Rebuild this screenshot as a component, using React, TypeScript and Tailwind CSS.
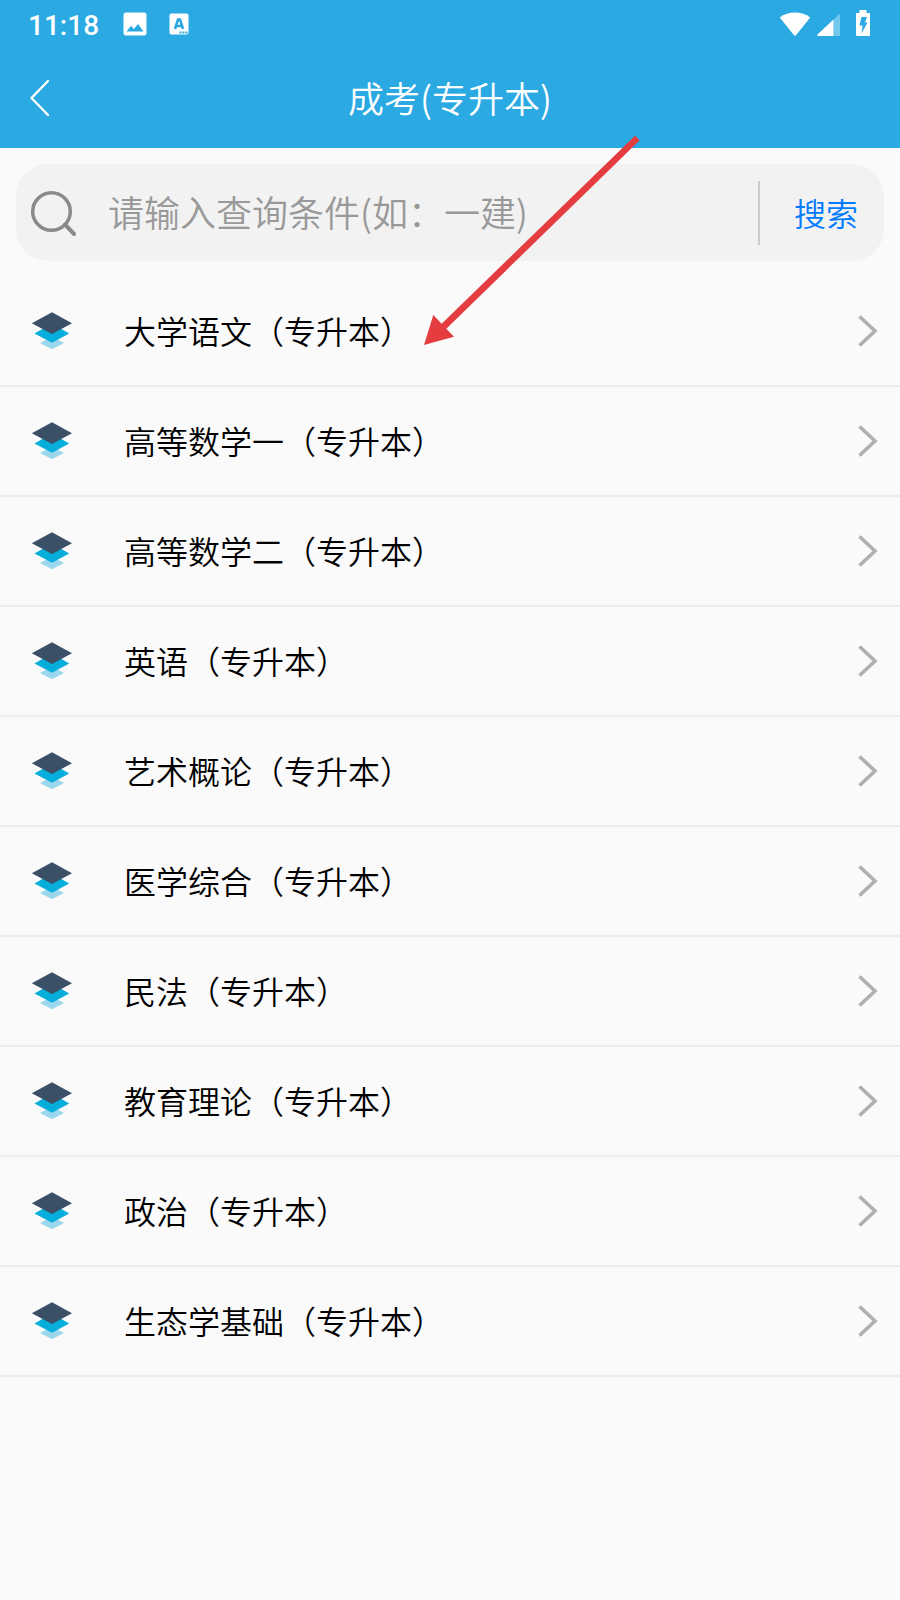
import { useState } from 'react';

interface Subject { id: number; name: string; }

const SUBJECTS: Subject[] = [
  { id: 1, name: '大学语文（专升本）' },
  { id: 2, name: '高等数学一（专升本）' },
  { id: 3, name: '高等数学二（专升本）' },
  { id: 4, name: '英语（专升本）' },
  { id: 5, name: '艺术概论（专升本）' },
  { id: 6, name: '医学综合（专升本）' },
  { id: 7, name: '民法（专升本）' },
  { id: 8, name: '教育理论（专升本）' },
  { id: 9, name: '政治（专升本）' },
  { id: 10, name: '生态学基础（专升本）' },
];

function StatusBar() {
  return (
    <div className="flex items-center justify-between h-12 pl-7 pr-[30px]">
      <div className="flex items-center">
        <span className="pt-1 font-['Roboto',sans-serif] font-medium text-[28px] leading-8">11:18</span>
        <svg className="ml-6 w-6 h-6" viewBox="0 0 24 24" aria-hidden="true">
          <path fill="#fff" fillRule="evenodd" d="M3 .5h18A2.500 2.500 0 0 1 23.500 3v18a2.500 2.500 0 0 1-2.500 2.500H3A2.500 2.500 0 0 1 .5 21V3A2.500 2.500 0 0 1 3 .5ZM3.500 19.500h17l-5.500-7.500-4.200 5-2.800-3.200Z" />
        </svg>
        <svg className="ml-[22px] w-5 h-[22px]" viewBox="0 0 20 22" aria-hidden="true">
          <rect x=".5" y=".5" width="19" height="21" rx="2" fill="#fff" />
          <path d="M6 16 9 6.500h2L14 16M7.500 13h5" fill="none" stroke="#2aa9e3" strokeWidth="2.600" />
          <path d="M10.500 19.500h8" stroke="#2aa9e3" strokeWidth="2" strokeDasharray="2 1" />
        </svg>
      </div>
      <div className="flex items-end pb-[2px]">
        <svg className="w-8 h-6" viewBox="0 0 32 24" aria-hidden="true">
          <path d="M.8 5.500C9-1.200 23-1.200 31.200 5.500L17 23.200q-1 1.200-2 0Z" fill="#fff" />
        </svg>
        <svg className="ml-[6px] w-[23px] h-[22px]" viewBox="0 0 23 22" aria-hidden="true">
          <path d="M23 1.500q0-2-1.500-.8L16.500 6v16H22q1 0 1-1Z" fill="#fff" opacity=".35" />
          <path d="M16.500 5.500V22H1q-1.500-.5-.3-1.700Z" fill="#fff" />
        </svg>
        <svg className="ml-4 w-[14px] h-[26px]" viewBox="0 0 14 26" aria-hidden="true">
          <path d="M3.500 0h7v3H14v22a1 1 0 0 1-1 1H1a1 1 0 0 1-1-1V3h3.500Z" fill="#fff" />
          <path d="M5.500 7h5.500L9 12.500H11.500L5.500 23.500 6.500 15.500H3.500Z" fill="#2aa9e3" />
        </svg>
      </div>
    </div>
  );
}

function LayersIcon() {
  return (
    <svg className="w-[42px] h-[38px] shrink-0" viewBox="0 0 42 38" aria-hidden="true">
      <path d="M21 24.500 33 31 21 37.200 9 31Z" fill="#9ad7ec" />
      <path d="M21 11.500 38.200 21.500 21 30.800 3.500 21.500Z" fill="#06aedb" />
      <path d="M21 .2 41 11.200 21 22 .8 11.200Z" fill="#3b5067" />
    </svg>
  );
}

export default function App() {
  const [query, setQuery] = useState('');
  const [keyword, setKeyword] = useState('');

  const handleSubmit = (e: React.FormEvent) => {
    e.preventDefault();
    setKeyword(query.trim());
  };

  return (
    <div className="relative min-h-screen bg-[#fafafa] text-black font-['Noto_Sans_CJK_SC',sans-serif] font-[350]">
      <header className="bg-[#2aa9e3] text-white">
        <StatusBar />
        <div className="grid grid-cols-[80px_1fr_80px] items-center h-[100px]">
          <button type="button" aria-label="返回" className="h-full pl-7">
            <svg className="w-6 h-10" viewBox="0 0 24 40" fill="none" aria-hidden="true">
              <path d="M20 3 3.500 20 20 37" stroke="#fff" strokeWidth="2.400" strokeLinecap="round" strokeLinejoin="round" />
            </svg>
          </button>
          <h1 className="pb-[2px] text-center text-[36px] leading-[52px]">成考(专升本)</h1>
        </div>
      </header>

      <form onSubmit={handleSubmit} className="flex items-center h-[97px] m-4 rounded-[32px] bg-[#f2f2f2]">
        <label htmlFor="query" aria-label="查询条件" className="shrink-0 ml-[14px]">
          <svg className="w-12 h-12" viewBox="0 0 48 48" fill="none" stroke="#8a8a8a" strokeWidth="3.500" aria-hidden="true">
            <circle cx="21.500" cy="22.500" r="18.800" />
            <path d="m35 35.500 9 9.500" strokeWidth="4" strokeLinecap="round" />
          </svg>
        </label>
        <input id="query" value={query} onChange={e => setQuery(e.target.value)} placeholder="请输入查询条件(如：一建)"
          className="flex-1 min-w-0 ml-[30px] h-full pb-1 bg-transparent text-[36px] placeholder:text-[#999] outline-none" />
        <div className="w-[2px] h-16 bg-[#ccc]" />
        <button className="shrink-0 h-full pb-[2px] pl-[34px] pr-[26px] text-[32px] text-[#007aff]">搜索</button>
      </form>

      <ul>
        {SUBJECTS.filter(s => s.name.includes(keyword)).map(s => (
          <li key={s.id} className="border-b-2 border-[#ededed]">
            <a href={`#subject-${s.id}`} className="flex items-center h-[108px] pl-[31px] pr-[22px]">
              <LayersIcon />
              <span className="flex-1 ml-[51px] pb-[2px] text-[32px] leading-[48px]">{s.name}</span>
              <svg className="w-5 h-8 shrink-0" viewBox="0 0 20 32" fill="none" aria-hidden="true">
                <path d="M1.500 1.500 17 16 1.500 30.500" stroke="#b0b0b0" strokeWidth="3.600" />
              </svg>
            </a>
          </li>
        ))}
      </ul>

      {/* guide arrow pointing at the first subject */}
      <svg className="absolute left-[424px] top-[135px] w-[216px] h-[210px] pointer-events-none" viewBox="0 0 216 210" aria-hidden="true">
        <path d="M0 210 9.300 180 17.700 188.700 211 .7 215.700 5.300 22.300 193.700 30 201.700Z" fill="#e53d3f" />
      </svg>
    </div>
  );
}
